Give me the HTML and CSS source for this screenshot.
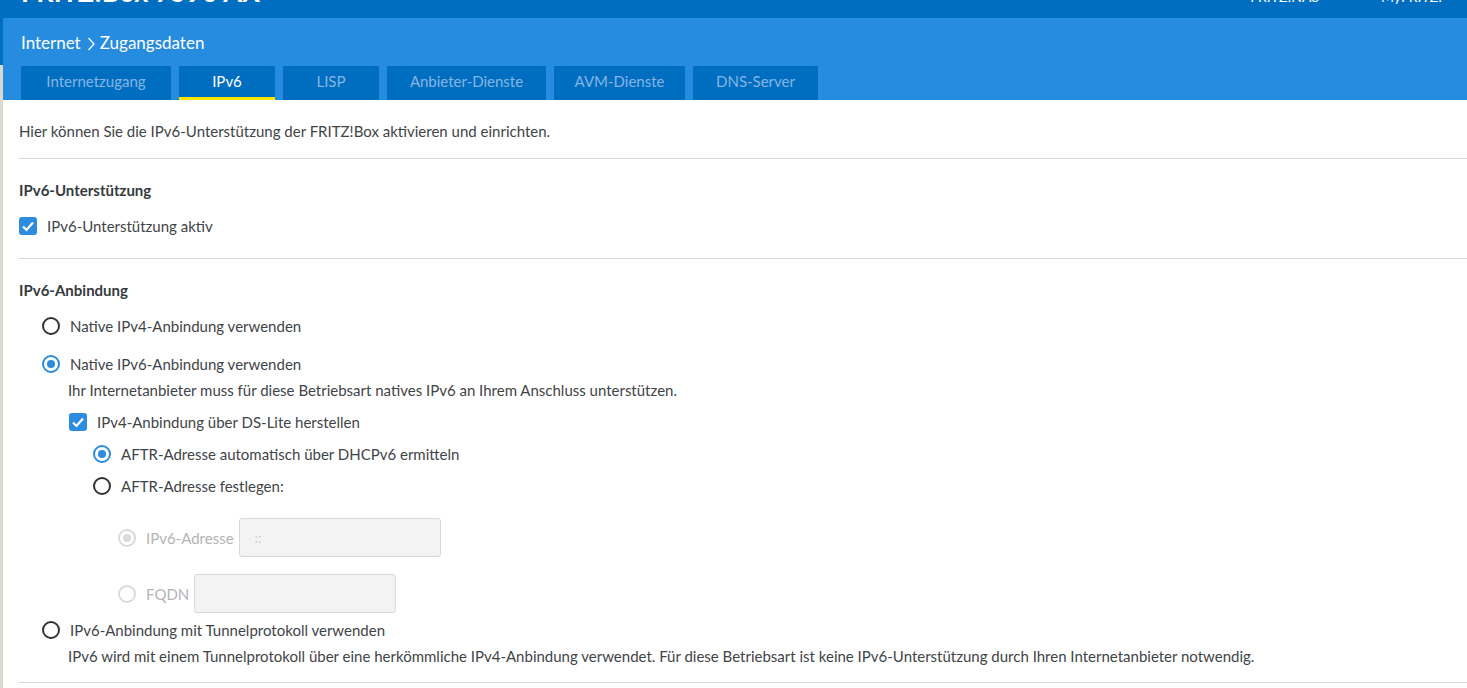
FILE: index.html
```html
<!DOCTYPE html>
<html lang="de">
<head>
  <meta charset="UTF-8">
  <title>FRITZ!Box 7590 AX - Zugangsdaten</title>
  <link rel="stylesheet" href="styles.css">
</head>
<body>

  <div class="topbar">
    <div class="brand">FRITZ!Box 7590 AX</div>
    <div class="toplinks">
      <span>FRITZ!NAS</span>
      <span>MyFRITZ!</span>
    </div>
  </div>

  <div class="page">
    <div class="edge"></div>

    <div class="main">
      <div class="headbar">
        <div class="crumbs">
          <span>Internet</span>
          <svg class="chev" width="9" height="16" viewBox="0 0 9 16"><polyline points="1.5,2 7,8 1.5,14" fill="none" stroke="#fff" stroke-width="1.3"/></svg>
          <span>Zugangsdaten</span>
        </div>
        <div class="tabs">
          <div class="tab w150">Internetzugang</div>
          <div class="tab w96 active">IPv6</div>
          <div class="tab w96">LISP</div>
          <div class="tab w159">Anbieter-Dienste</div>
          <div class="tab w131">AVM-Dienste</div>
          <div class="tab w125">DNS-Server</div>
        </div>
      </div>

      <div class="content">
        <p class="intro">Hier können Sie die IPv6-Unterstützung der FRITZ!Box aktivieren und einrichten.</p>

        <div class="section">
          <h2>IPv6-Unterstützung</h2>
          <div class="row first">
            <span class="check"><svg width="18" height="18" viewBox="0 0 18 18"><polyline points="4,9.5 7.5,13 14,5.5" fill="none" stroke="#fff" stroke-width="2.2"/></svg></span>
            <span>IPv6-Unterstützung aktiv</span>
          </div>
        </div>

        <div class="section">
          <h2>IPv6-Anbindung</h2>

          <div class="row first lvl1">
            <span class="radio"></span>
            <span>Native IPv4-Anbindung verwenden</span>
          </div>

          <div class="row lvl1 gap18">
            <span class="radio on"></span>
            <span>Native IPv6-Anbindung verwenden</span>
          </div>
          <div class="desc">Ihr Internetanbieter muss für diese Betriebsart natives IPv6 an Ihrem Anschluss unterstützen.</div>

          <div class="row lvl2 gap12">
            <span class="check"><svg width="18" height="18" viewBox="0 0 18 18"><polyline points="4,9.5 7.5,13 14,5.5" fill="none" stroke="#fff" stroke-width="2.2"/></svg></span>
            <span>IPv4-Anbindung über DS-Lite herstellen</span>
          </div>

          <div class="row lvl3 gap12">
            <span class="radio on"></span>
            <span>AFTR-Adresse automatisch über DHCPv6 ermitteln</span>
          </div>

          <div class="row lvl3 gap12">
            <span class="radio"></span>
            <span>AFTR-Adresse festlegen:</span>
          </div>

          <div class="row lvl4 field disabled addr">
            <span class="radio on"></span>
            <span>IPv6-Adresse</span>
            <div class="inputbox">::</div>
          </div>

          <div class="row lvl4 field disabled fqdn">
            <span class="radio"></span>
            <span>FQDN</span>
            <div class="inputbox"></div>
          </div>

          <div class="row lvl1 gap7">
            <span class="radio"></span>
            <span>IPv6-Anbindung mit Tunnelprotokoll verwenden</span>
          </div>
          <div class="desc">IPv6 wird mit einem Tunnelprotokoll über eine herkömmliche IPv4-Anbindung verwendet. Für diese Betriebsart ist keine IPv6-Unterstützung durch Ihren Internetanbieter notwendig.</div>
        </div>
      </div>
    </div>
  </div>

</body>
</html>
```

FILE: styles.css
```css
body {
  margin: 0;
  font-family: 'Lato', 'Open Sans', sans-serif;
  font-size: 15px;
  color: #3f4448;
  background: #fff;
  overflow: hidden;
}

.topbar {
  height: 18px;
  background: #006ec0;
  overflow: hidden;
  display: flex;
  justify-content: space-between;
  color: #fff;
}

.brand {
  font-size: 27px;
  font-weight: bold;
  line-height: 28px;
  margin-top: -22px;
  padding-left: 21px;
}

.toplinks {
  display: flex;
  gap: 62px;
  font-size: 14px;
  line-height: 14px;
  margin-top: -10px;
  padding-right: 25px;
}

.page {
  display: flex;
}

.edge {
  width: 3px;
  flex: none;
  background: linear-gradient(to bottom, #006ec0 0, #006ec0 47px, #dcd9d1 47px);
  min-height: 670px;
}

.main {
  flex: 1;
}

.headbar {
  background: #268ce0;
  height: 82px;
  padding-left: 18px;
  box-sizing: border-box;
}

.crumbs {
  color: #fff;
  font-size: 17px;
  line-height: 20px;
  padding-top: 15px;
  height: 48px;
  box-sizing: border-box;
  display: flex;
  align-items: flex-start;
}

.chev {
  margin: 3px 4px 0 6px;
}

.tabs {
  display: flex;
  gap: 8px;
}

.tab {
  background: #006ec0;
  color: #85b5e4;
  height: 34px;
  line-height: 31px;
  box-sizing: border-box;
  text-align: center;
  font-size: 15px;
  white-space: nowrap;
}

.w150 { width: 150px; }
.w96 { width: 96px; }
.w159 { width: 159px; }
.w131 { width: 131px; }
.w125 { width: 125px; }

.tab.active {
  color: #fff;
  border-bottom: 3px solid #ffe500;
}

.content {
  padding-left: 16px;
}

.intro {
  margin: 0;
  line-height: 20px;
  padding: 21px 0 17px;
  border-bottom: 1px solid #d6d6d6;
}

.section {
  padding: 21px 0 22px;
  border-bottom: 1px solid #d6d6d6;
}

.section:last-child {
  padding-bottom: 16px;
}

h2 {
  margin: 0;
  font-size: 15px;
  line-height: 20px;
  font-weight: bold;
  color: #353a3e;
}

.row {
  display: flex;
  align-items: center;
  height: 20px;
}

.row.first { margin-top: 16px; }
.row.gap18 { margin-top: 18px; }
.row.gap12 { margin-top: 12px; }
.row.gap7 { margin-top: 7px; }

.lvl1 { padding-left: 23px; }
.lvl2 { padding-left: 50px; }
.lvl3 { padding-left: 74px; }
.lvl4 { padding-left: 99px; }

.desc {
  padding-left: 49px;
  line-height: 20px;
  margin-top: 6px;
}

.check {
  width: 18px;
  height: 18px;
  border-radius: 3px;
  background: #2b8ce0;
  margin-right: 10px;
  flex: none;
}

.check svg {
  display: block;
}

.radio {
  width: 18px;
  height: 18px;
  border: 2px solid #333;
  border-radius: 50%;
  box-sizing: border-box;
  margin-right: 10px;
  flex: none;
  position: relative;
}

.radio.on {
  border-color: #2b8ce0;
}

.radio.on::after {
  content: "";
  position: absolute;
  left: 3px;
  top: 3px;
  width: 8px;
  height: 8px;
  border-radius: 50%;
  background: #2b8ce0;
}

.field {
  height: 39px;
}

.field.addr { margin-top: 22px; }
.field.fqdn { margin-top: 17px; }

.disabled {
  color: #b4b4b4;
}

.disabled .radio {
  border-color: #dadada;
}

.disabled .radio.on::after {
  background: #dadada;
}

.inputbox {
  width: 202px;
  height: 39px;
  box-sizing: border-box;
  margin-left: 5px;
  background: #f3f3f3;
  border: 1px solid #d9d9d9;
  border-radius: 3px;
  color: #cfcfcf;
  line-height: 37px;
  padding-left: 15px;
  font-size: 14px;
}
```
